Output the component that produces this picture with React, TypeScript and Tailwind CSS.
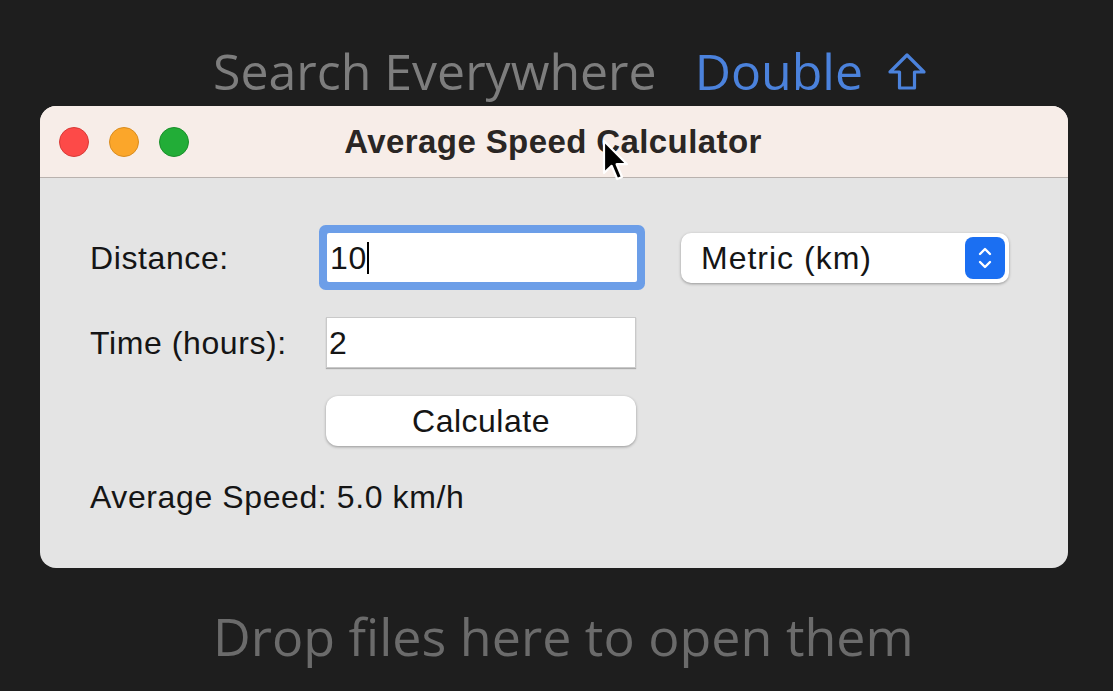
import React from 'react';

function Cursor() {
  return (
    <svg className="absolute left-[562px] top-[33px]" width="30" height="44" viewBox="0 0 15 22">
      <path
        d="M1 1 L1 17 L4.8 13.4 L7.6 20 L10 19 L7.3 12.6 L12.5 12.6 Z"
        fill="#000"
        stroke="#fff"
        strokeWidth="1.1"
        strokeLinejoin="round"
      />
    </svg>
  );
}

function Stepper() {
  return (
    <div className="w-[40px] h-[42px] rounded-[8px] bg-[#1b6ff2] flex items-center justify-center">
      <svg width="16" height="26" viewBox="0 0 16 26" fill="none" stroke="#fff" strokeWidth="2.4" strokeLinecap="round" strokeLinejoin="round">
        <path d="M3 9 L8 4 L13 9" />
        <path d="M3 17 L8 22 L13 17" />
      </svg>
    </div>
  );
}

function ShiftArrow() {
  return (
    <svg width="40" height="40" viewBox="0 0 40 40" fill="none" stroke="#4b82dc" strokeWidth="3.2" strokeLinejoin="round">
      <path d="M20 3 L37 20 L27.5 20 L27.5 36 L12.5 36 L12.5 20 L3 20 Z" />
    </svg>
  );
}

export default function App() {
  return (
    <div
      className="w-[1113px] h-[691px] bg-[#1e1e1e] overflow-hidden flex flex-col"
      style={{ fontFamily: '"Liberation Sans", Arial, sans-serif' }}
    >
      {/* IDE hint above */}
      <div
        className="h-[106px] flex items-center pl-[213px] pt-[36px] text-[50px] leading-none"
        style={{ fontFamily: '"Open Sans", "DejaVu Sans", sans-serif' }}
      >
        <span className="text-[#7d7d7d]">Search Everywhere</span>
        <span className="text-[#4b82dc] ml-[38px]">Double</span>
        <span className="ml-[24px] mt-[2px]">
          <ShiftArrow />
        </span>
      </div>

      {/* Window */}
      <div className="relative ml-[40px] w-[1028px] h-[462px] rounded-[16px] overflow-hidden bg-[#e4e4e4] flex flex-col">
        <div className="relative h-[72px] bg-[#f7ede8] border-b border-[#b9b2ae] flex items-center">
          <div className="flex items-center gap-[20px] pl-[19px]">
            <span className="w-[30px] h-[30px] rounded-full bg-[#fd4a48] border border-[#d83a37]" />
            <span className="w-[30px] h-[30px] rounded-full bg-[#fba62a] border border-[#d98c1f]" />
            <span className="w-[30px] h-[30px] rounded-full bg-[#22ad37] border border-[#1a8f2b]" />
          </div>
          <div className="absolute inset-0 flex items-center justify-center pr-[2px]">
            <span className="text-[33px] font-bold tracking-[0.4px] text-[#2a2624]">Average Speed Calculator</span>
          </div>
          <Cursor />
        </div>

        <div className="flex flex-col pl-[50px] pt-[55px] text-[32px] tracking-[0.6px] text-[#151515]">
          <div className="flex items-center h-[49px]">
            <span className="w-[237px]">Distance:</span>
            <div className="w-[310px] h-[49px] bg-white ring-[8px] ring-[#6c9ee8] rounded-[2px] flex items-center pl-[3px]">
              <span>10</span>
              <span className="w-[2px] h-[32px] bg-black" />
            </div>
            <div className="ml-[44px] w-[328px] h-[50px] bg-white rounded-[10px] shadow-[0_1px_3px_rgba(0,0,0,0.35)] flex items-center justify-between pl-[20px] pr-[4px] tracking-[1px]">
              <span>Metric (km)</span>
              <Stepper />
            </div>
          </div>

          <div className="flex items-center h-[51px] mt-[35px]">
            <span className="w-[236px]">Time (hours):</span>
            <div className="w-[310px] h-[51px] bg-white border border-[#c9c9c9] shadow-[0_1px_1px_rgba(0,0,0,0.25)] flex items-center pl-[2px]">
              2
            </div>
          </div>

          <div className="flex items-center h-[50px] mt-[28px]">
            <span className="w-[236px]" />
            <button className="w-[310px] h-[50px] bg-white rounded-[12px] shadow-[0_1px_3px_rgba(0,0,0,0.35)] text-[#151515] tracking-[0.5px]">
              Calculate
            </button>
          </div>

          <div className="mt-[35px] h-[32px] flex items-center">Average Speed: 5.0 km/h</div>
        </div>
      </div>

      {/* IDE hint below */}
      <div
        className="pl-[213px] pt-[42px] text-[52px] leading-none text-[#6b6b6b]"
        style={{ fontFamily: '"Open Sans", "DejaVu Sans", sans-serif' }}
      >
        Drop files here to open them
      </div>
    </div>
  );
}
